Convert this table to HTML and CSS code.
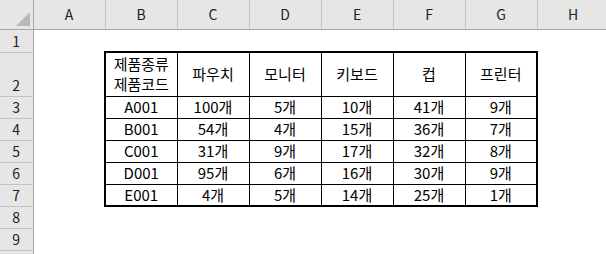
FILE: index.html
```html
<!DOCTYPE html>
<html lang="ko">
<head>
<meta charset="utf-8">
<link rel="stylesheet" href="styles.css">
</head>
<body>
<table class="sheet">
  <colgroup>
    <col class="col-rh">
    <col class="col"><col class="col"><col class="col"><col class="col">
    <col class="col"><col class="col"><col class="col"><col class="col">
  </colgroup>
  <thead>
    <tr class="hdr">
      <th class="corner"><span class="tri"></span></th>
      <th>A</th><th>B</th><th>C</th><th>D</th><th>E</th><th>F</th><th>G</th><th>H</th>
    </tr>
  </thead>
  <tbody>
    <tr class="r r1">
      <th class="rn">1</th><td></td><td></td><td></td><td></td><td></td><td></td><td></td><td></td>
    </tr>
    <tr class="r r2">
      <th class="rn">2</th><td></td>
      <td class="t top left two">제품종류<br>제품코드</td>
      <td class="t top">파우치</td>
      <td class="t top">모니터</td>
      <td class="t top">키보드</td>
      <td class="t top">컵</td>
      <td class="t top right">프린터</td>
      <td></td>
    </tr>
    <tr class="r">
      <th class="rn">3</th><td></td>
      <td class="t left">A001</td><td class="t">100개</td><td class="t">5개</td><td class="t">10개</td><td class="t">41개</td><td class="t right">9개</td><td></td>
    </tr>
    <tr class="r">
      <th class="rn">4</th><td></td>
      <td class="t left">B001</td><td class="t">54개</td><td class="t">4개</td><td class="t">15개</td><td class="t">36개</td><td class="t right">7개</td><td></td>
    </tr>
    <tr class="r">
      <th class="rn">5</th><td></td>
      <td class="t left">C001</td><td class="t">31개</td><td class="t">9개</td><td class="t">17개</td><td class="t">32개</td><td class="t right">8개</td><td></td>
    </tr>
    <tr class="r">
      <th class="rn">6</th><td></td>
      <td class="t left">D001</td><td class="t">95개</td><td class="t">6개</td><td class="t">16개</td><td class="t">30개</td><td class="t right">9개</td><td></td>
    </tr>
    <tr class="r">
      <th class="rn">7</th><td></td>
      <td class="t left bottom">E001</td><td class="t bottom">4개</td><td class="t bottom">5개</td><td class="t bottom">14개</td><td class="t bottom">25개</td><td class="t bottom right">1개</td><td></td>
    </tr>
    <tr class="r">
      <th class="rn">8</th><td></td><td></td><td></td><td></td><td></td><td></td><td></td><td></td>
    </tr>
    <tr class="r">
      <th class="rn">9</th><td></td><td></td><td></td><td></td><td></td><td></td><td></td><td></td>
    </tr>
    <tr class="r">
      <th class="rn"></th><td></td><td></td><td></td><td></td><td></td><td></td><td></td><td></td>
    </tr>
  </tbody>
</table>
</body>
</html>
```

FILE: styles.css
```css
html, body {
  margin: 0;
  padding: 0;
  background: #ffffff;
  overflow: hidden;
}

.sheet {
  border-collapse: collapse;
  table-layout: fixed;
  width: 609px;
  font-family: "Noto Sans CJK KR", "Noto Sans", sans-serif;
  color: #000000;
}

.col-rh { width: 33px; }
.col { width: 72px; }

.sheet td, .sheet th {
  padding: 0;
  font-weight: normal;
  text-align: center;
}

/* column header */
.hdr { height: 29px; }
.hdr th {
  background: #e6e6e6;
  border-right: 1px solid #c3c3c3;
  border-bottom: 1px solid #a6a6a6;
  font-size: 14px;
  color: #222222;
  vertical-align: middle;
  line-height: 20px;
}
.hdr th.corner {
  border-right: 1px solid #a6a6a6;
  position: relative;
}
.tri {
  position: absolute;
  right: 3px;
  bottom: 3px;
  width: 0;
  height: 0;
  border-left: 14px solid transparent;
  border-bottom: 14px solid #b9b9b9;
}

/* row header */
.r { height: 22px; }
.r1 { height: 23px; }
.r2 { height: 44px; }
.rn {
  background: #e6e6e6;
  border-right: 1px solid #a6a6a6;
  border-bottom: 1px solid #c3c3c3;
  font-size: 14px;
  color: #222222;
  vertical-align: bottom;
  line-height: 20px;
  padding-bottom: 1px !important;
}

/* data table */
.t {
  border: 1px solid #000000;
  font-size: 15px;
  line-height: 20px;
  vertical-align: middle;
  white-space: nowrap;
}
.t.top { border-top: 2px solid #000000; }
.t.left { border-left: 2px solid #000000; }
.t.right { border-right: 2px solid #000000; }
.t.bottom { border-bottom: 2px solid #000000; }
```
